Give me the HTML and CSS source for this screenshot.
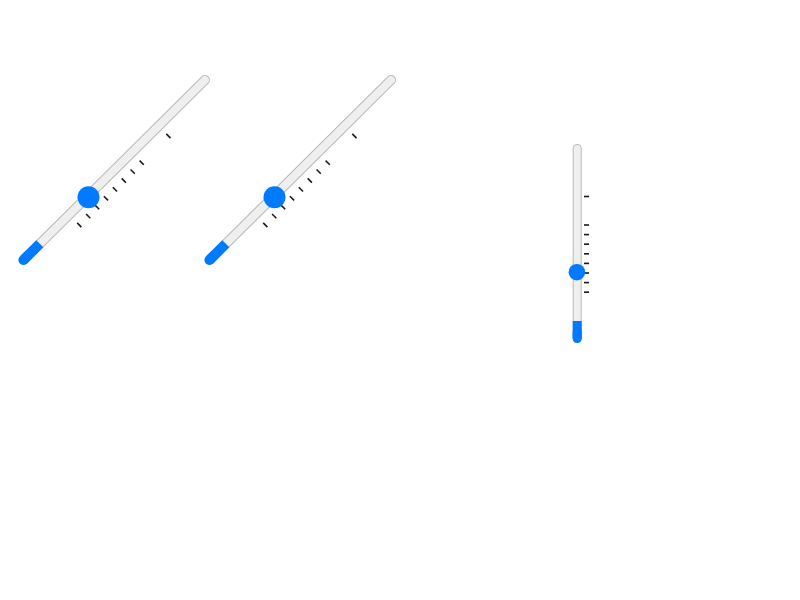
FILE: index.html
```html
<!DOCTYPE html>
<html lang="en">
<head>
    <meta charset="UTF-8">
    <meta name="viewport" content="width=device-width, initial-scale=1.0">
    <title>Sliders</title>
    <link rel="stylesheet" href="styles.css">
</head>
<body>
    <div class="stage">
        <svg class="slider diag" viewBox="0 0 186 200" width="186" height="200">
            <line class="track-edge" x1="13.5" y1="190" x2="195" y2="10"/>
            <line class="track-fill" x1="13.5" y1="190" x2="195" y2="10"/>
            <line class="value-cap" x1="13.5" y1="190" x2="18" y2="185.5"/>
            <line class="value" x1="13.5" y1="190" x2="29.8" y2="173.8"/>
            <g class="ticks">
                <line x1="67.2" y1="152.9" x2="71.4" y2="157.1"/>
                <line x1="76.1" y1="144.0" x2="80.3" y2="148.2"/>
                <line x1="85.0" y1="135.1" x2="89.2" y2="139.3"/>
                <line x1="93.9" y1="126.2" x2="98.1" y2="130.4"/>
                <line x1="102.8" y1="117.3" x2="107.0" y2="121.5"/>
                <line x1="111.7" y1="108.4" x2="115.9" y2="112.6"/>
                <line x1="120.6" y1="99.5" x2="124.8" y2="103.7"/>
                <line x1="129.6" y1="90.6" x2="133.8" y2="94.8"/>
                <line x1="156.3" y1="63.9" x2="160.5" y2="68.1"/>
            </g>
            <circle class="thumb" cx="78.5" cy="127.2" r="11"/>
        </svg>
        <svg class="slider diag" viewBox="0 0 186 200" width="186" height="200">
            <line class="track-edge" x1="13.5" y1="190" x2="195" y2="10"/>
            <line class="track-fill" x1="13.5" y1="190" x2="195" y2="10"/>
            <line class="value-cap" x1="13.5" y1="190" x2="18" y2="185.5"/>
            <line class="value" x1="13.5" y1="190" x2="29.8" y2="173.8"/>
            <g class="ticks">
                <line x1="67.2" y1="152.9" x2="71.4" y2="157.1"/>
                <line x1="76.1" y1="144.0" x2="80.3" y2="148.2"/>
                <line x1="85.0" y1="135.1" x2="89.2" y2="139.3"/>
                <line x1="93.9" y1="126.2" x2="98.1" y2="130.4"/>
                <line x1="102.8" y1="117.3" x2="107.0" y2="121.5"/>
                <line x1="111.7" y1="108.4" x2="115.9" y2="112.6"/>
                <line x1="120.6" y1="99.5" x2="124.8" y2="103.7"/>
                <line x1="129.6" y1="90.6" x2="133.8" y2="94.8"/>
                <line x1="156.3" y1="63.9" x2="160.5" y2="68.1"/>
            </g>
            <circle class="thumb" cx="78.5" cy="127.2" r="11"/>
        </svg>
        <svg class="slider vert" viewBox="0 0 40 210" width="40" height="210">
            <line class="track-edge thin" x1="17.2" y1="8.5" x2="17.2" y2="198.5"/>
            <line class="track-fill thin" x1="17.2" y1="8.5" x2="17.2" y2="198.5"/>
            <line class="value-cap thin" x1="17.2" y1="192" x2="17.2" y2="198.5"/>
            <line class="value thin" x1="17.2" y1="181" x2="17.2" y2="198.5"/>
            <g class="ticks">
                <line x1="24" y1="152.2" x2="29" y2="152.2"/>
                <line x1="24" y1="142.6" x2="29" y2="142.6"/>
                <line x1="24" y1="133" x2="29" y2="133"/>
                <line x1="24" y1="123.4" x2="29" y2="123.4"/>
                <line x1="24" y1="113.8" x2="29" y2="113.8"/>
                <line x1="24" y1="104.2" x2="29" y2="104.2"/>
                <line x1="24" y1="94.6" x2="29" y2="94.6"/>
                <line x1="24" y1="85" x2="29" y2="85"/>
                <line x1="24" y1="56.5" x2="29" y2="56.5"/>
            </g>
            <circle class="thumb" cx="16.9" cy="132.2" r="8.3"/>
        </svg>
    </div>
</body>
</html>
```

FILE: styles.css
```css
body {
    margin: 0;
    background: #ffffff;
    font-family: "Liberation Sans", Arial, sans-serif;
}
.stage {
    display: flex;
    align-items: flex-start;
    padding: 70px 0 0 10px;
}
.slider {
    display: block;
    flex-shrink: 0;
    overflow: visible;
}
.vert {
    margin: 70px 0 0 178px;
}
.track-edge {
    stroke: #b9b9b9;
    stroke-width: 10;
    stroke-linecap: round;
}
.track-fill {
    stroke: #efefef;
    stroke-width: 8;
    stroke-linecap: round;
}
.value {
    stroke: #007aff;
    stroke-width: 10;
    stroke-linecap: butt;
}
.value-cap {
    stroke: #007aff;
    stroke-width: 10;
    stroke-linecap: round;
}
.track-edge.thin,
.value.thin,
.value-cap.thin {
    stroke-width: 9;
}
.track-fill.thin {
    stroke-width: 7;
}
.ticks line {
    stroke: #1a1a1a;
    stroke-width: 1.6;
}
.thumb {
    fill: #007aff;
}
```
